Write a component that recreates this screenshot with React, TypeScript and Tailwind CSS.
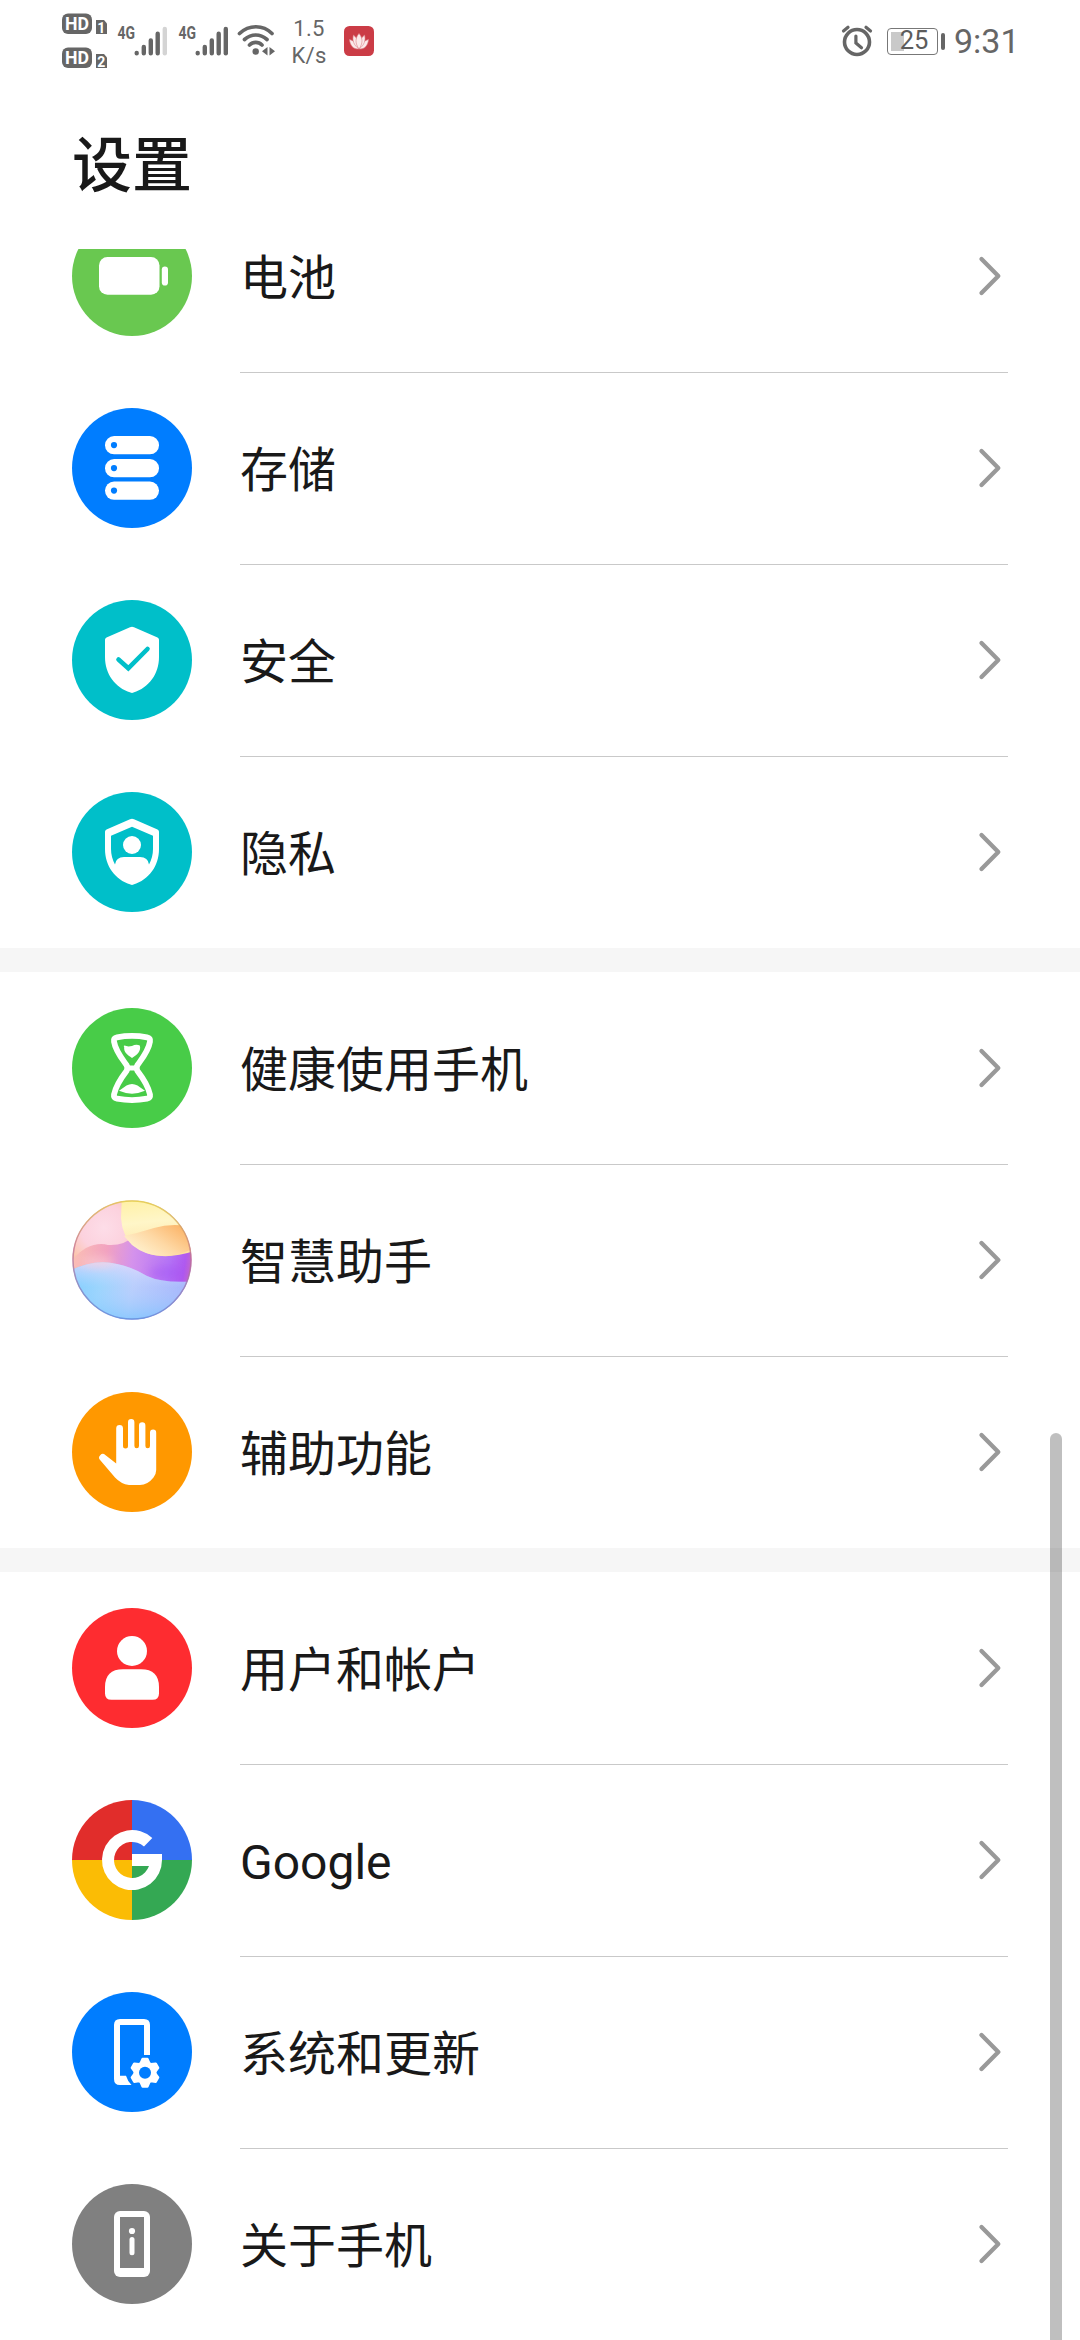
import type { ReactNode } from "react";

const GREY = "#666666";

function HdBadge({ n }: { n: string }) {
  return (
    <svg width="46" height="22" viewBox="0 0 46 22" fontFamily="Roboto, sans-serif" fontWeight="700">
      <rect x="0" y="0.5" width="30" height="20.5" rx="6" fill={GREY} />
      <text x="15" y="17" fontSize="18" fill="#fff" textAnchor="middle" textLength="24" lengthAdjust="spacingAndGlyphs">
        HD
      </text>
      <path d="M34 7h8l3 3.5v10.500h-11z" fill={GREY} />
      <text x="39.300" y="19.500" fontSize="14" fill="#fff" textAnchor="middle">
        {n}
      </text>
    </svg>
  );
}

function Signal({ last }: { last: string }) {
  return (
    <svg width="52" height="40" viewBox="0 -8 52 40" fontFamily="Roboto, sans-serif">
      <text x="0.500" y="14.500" fontSize="18" fontWeight="700" fill={GREY} textLength="17.500" lengthAdjust="spacingAndGlyphs">
        4G
      </text>
      <g strokeWidth="4.400" strokeLinecap="round" stroke={GREY}>
        <path d="M19.700 29v.3M26.800 23v6.300M33.800 16.500v12.800M40.700 9.700v19.600" />
        <path d="M47.800 5v24.300" stroke={last} />
      </g>
    </svg>
  );
}

function Wifi() {
  return (
    <svg width="38" height="32" viewBox="237 24 38 32" fill="none" stroke={GREY} strokeWidth="3.700" strokeLinecap="round">
      <path d="M239.500 33.500C249 24.500 263 24.500 272 33.500M244.500 39.500C251.500 33.500 260 33.500 267 39.500M249.500 45C253 41.500 258.500 41.500 262 45" />
      <circle cx="255.700" cy="51.500" r="3.200" fill={GREY} stroke="none" />
      <path d="M267.500 47v8.500l-5.500-4.200zM269.500 47v8.500l5.500-4.200z" fill={GREY} stroke="none" />
    </svg>
  );
}

function LotusBadge() {
  return (
    <svg width="30" height="30" viewBox="0 0 30 30">
      <rect width="30" height="30" rx="5.500" fill="#cb3c46" />
      <g fill="#fbeaea" stroke="#dc8088" strokeWidth="0.600">
        <path d="M15 23C9 23.500 6 19 5.500 13.500c4 1 7.500 4 9.500 9.500zM15 23c6 .5 9-4 9.500-9.500-4 1-7.500 4-9.500 9.500z" />
        <path d="M15 23C9.500 19 8 14 9.500 9c3.500 3 5.500 7 5.500 14zM15 23c5.500-4 7-9 5.500-14-3.500 3-5.500 7-5.500 14z" />
        <path d="M15 23c-4-5.500-4-11 0-15.500 4 4.500 4 10 0 15.500z" />
      </g>
    </svg>
  );
}

function Alarm() {
  return (
    <svg width="32" height="32" viewBox="840 24 32 32" fill="none" stroke={GREY} strokeLinecap="round">
      <circle cx="856" cy="41" r="12.500" strokeWidth="3.600" />
      <path d="M854.900 35v7l5.600 4.800M842.500 30l4.500-3.700M869.500 30l-4.500-3.700" strokeWidth="3.200" />
    </svg>
  );
}

function BatteryLevel() {
  return (
    <div className="ml-[14px] flex items-center">
      <div className="flex h-[27px] w-[51px] items-center rounded-[4px] border-[1.500px] border-[#777] bg-[linear-gradient(#c9c9c9,#c9c9c9)] bg-[length:13px_19px] bg-[position:3px_3px] bg-no-repeat">
        <span className="w-full pl-[3px] text-center text-[25.500px] leading-none text-[#5c5c5c]">25</span>
      </div>
      <div className="ml-[3px] h-[17px] w-[4px] rounded-full bg-[#666]" />
    </div>
  );
}

function StatusBar() {
  return (
    <div className="flex h-20 items-start pl-[62px] font-[Roboto,sans-serif] text-[#666]">
      <div className="flex w-[46px] flex-col gap-[12px] pt-[13px]">
        <HdBadge n="1" />
        <HdBadge n="2" />
      </div>
      <div className="ml-[9px] flex gap-[9px] pt-[16px]">
        <Signal last="#d4d4d4" />
        <Signal last={GREY} />
      </div>
      <div className="ml-[7px] pt-[24px]">
        <Wifi />
      </div>
      <div className="ml-[16px] flex w-[36px] flex-col items-center pt-[15px] text-[22px] leading-[27px] tracking-[0.300px]">
        <span>1.5</span>
        <span>K/s</span>
      </div>
      <div className="ml-[17px] pt-[26px]">
        <LotusBadge />
      </div>
      <div className="mr-[66px] ml-auto flex items-center pt-[25px]">
        <Alarm />
        <BatteryLevel />
        <span className="ml-[9px] w-[60px] text-[34px] leading-[32px] whitespace-nowrap">9:31</span>
      </div>
    </div>
  );
}

const SHIELD = "M60 26.800Q61 26.800 62 27.300L85.500 37.500Q87 38.200 87 39.800V57C87 74 77 87.500 61.500 92.600Q60 93.200 58.500 92.600C43 87.500 33 74 33 57V39.800Q33 38.200 34.500 37.500L58 27.300Q59 26.800 60 26.800Z";

function Disc({ color, children }: { color: string; children: ReactNode }) {
  return (
    <svg width="120" height="120" viewBox="0 0 120 120" fill="#fff" className="shrink-0">
      <circle cx="60" cy="60" r="60" fill={color} />
      {children}
    </svg>
  );
}

const BatteryIcon = () => (
  <Disc color="#69c850">
    <rect x="27" y="41" width="60.500" height="37.700" rx="8.500" />
    <rect x="89.800" y="50.500" width="6.200" height="19" rx="3.100" />
  </Disc>
);

const StorageIcon = () => (
  <Disc color="#007dff">
    {[28, 51, 73.5].map((y) => (
      <g key={y}>
        <rect x="33" y={y} width="54" height="18.300" rx="9.100" />
        <circle cx="42" cy={y + 9.1} r="3.100" fill="#007dff" />
      </g>
    ))}
  </Disc>
);

const SecurityIcon = () => (
  <Disc color="#00bfc9">
    <path d={SHIELD} />
    <path d="M46.500 59.500L56.300 68.300 75.500 49" fill="none" stroke="#00bfc9" strokeWidth="4.600" strokeLinecap="round" />
  </Disc>
);

const PrivacyIcon = () => (
  <Disc color="#00bfc9">
    <path d={SHIELD} />
    <path d="M60 34.800L81 43.800V57Q81 65 77 72.500Q76 65 68 65H52Q44 65 43 72.500Q39 65 39 57V43.800Z" fill="#00bfc9" />
    <circle cx="60" cy="53" r="9" />
  </Disc>
);

const HourglassIcon = () => (
  <Disc color="#48cc48">
    <path
      d="M45 29.300Q60 26.500 75 29.300Q78.800 30 78 33.500C76.500 43 70.500 50 65.500 57Q63.800 60 65.500 63C70.500 69.500 76 77 78 86.500Q78.500 90 75 90.700Q60 93.500 45 90.700Q41.500 90 42 86.500C44 77 49.500 69.500 54.500 63Q56.200 60 54.500 57C49.500 50 43.500 43 42 33.500Q41.200 30 45 29.300Z"
      fill="none"
      stroke="#fff"
      strokeWidth="5.800"
    />
    <rect x="57" y="57.500" width="6" height="5" />
    <path d="M52.200 39Q51 38 52.500 37.600Q55.500 39 60 38Q64 36 67.800 37.500C69.500 43 65 47 60 50C55.500 47 51.500 44 52.200 39Z" />
    <path d="M47 82.800Q51 80 54.500 77.500Q60 74.500 65.500 77.500Q69 80 73 82.800Q60 88.500 47 82.800Z" />
  </Disc>
);

const AssistantIcon = () => (
  <svg width="120" height="120" viewBox="0 0 120 120" className="shrink-0">
    <defs>
      <clipPath id="orb">
        <circle cx="60" cy="60" r="59.500" />
      </clipPath>
      <linearGradient id="rim" x1="0.600" y1="0" x2="0.500" y2="1">
        <stop offset="0" stopColor="#e0c83c" />
        <stop offset="0.450" stopColor="#c07090" />
        <stop offset="1" stopColor="#5f86d8" />
      </linearGradient>
      <linearGradient id="band" x1="0" y1="0.450" x2="1" y2="0.600">
        <stop offset="0" stopColor="#fbc0b4" />
        <stop offset="0.280" stopColor="#f2a2c0" />
        <stop offset="0.500" stopColor="#d492ec" />
        <stop offset="0.800" stopColor="#b574f6" />
        <stop offset="0.930" stopColor="#b05af0" />
        <stop offset="1" stopColor="#c868c4" />
      </linearGradient>
      <radialGradient id="blush" gradientUnits="userSpaceOnUse" cx="32" cy="28" r="42">
        <stop offset="0" stopColor="#fddde8" />
        <stop offset="0.550" stopColor="#fcd2de" />
        <stop offset="1" stopColor="#fcc4a8" />
      </radialGradient>
      <linearGradient id="sun" x1="0.200" y1="0" x2="0.350" y2="1">
        <stop offset="0" stopColor="#fff0a0" />
        <stop offset="0.450" stopColor="#fff6c8" />
        <stop offset="1" stopColor="#fde0a0" />
      </linearGradient>
      <linearGradient id="peach" x1="0.100" y1="0.700" x2="0.900" y2="0.200">
        <stop offset="0" stopColor="#fff0cc" />
        <stop offset="0.450" stopColor="#fed8a4" />
        <stop offset="1" stopColor="#fbb468" />
      </linearGradient>
      <linearGradient id="sea" x1="0" y1="0.400" x2="1" y2="0.500">
        <stop offset="0" stopColor="#70ccff" />
        <stop offset="0.250" stopColor="#94d4fd" />
        <stop offset="0.500" stopColor="#b8ccfc" />
        <stop offset="1" stopColor="#9ca8fb" />
      </linearGradient>
      <linearGradient id="mist" x1="0" y1="0" x2="0" y2="1">
        <stop offset="0" stopColor="#ecd8fc" stopOpacity="0.800" />
        <stop offset="0.400" stopColor="#c0d8ff" stopOpacity="0.200" />
        <stop offset="1" stopColor="#66c4ff" stopOpacity="0.700" />
      </linearGradient>
      <filter id="soft" x="-10%" y="-10%" width="120%" height="120%">
        <feGaussianBlur stdDeviation="0.700" />
      </filter>
      <filter id="softer" x="-60%" y="-60%" width="220%" height="220%">
        <feGaussianBlur stdDeviation="4" />
      </filter>
    </defs>
    <g clipPath="url(#orb)">
      <rect width="120" height="120" fill="url(#band)" />
      <ellipse cx="95" cy="73" rx="18" ry="7" fill="#a050f4" opacity="0.400" filter="url(#softer)" />
      <g filter="url(#soft)">
        <path d="M-5 -5H62V36Q52 46 36 45Q26 42 14 48Q4 54 -5 66Z" fill="url(#blush)" />
        <path d="M50 -5H125V50Q85 64 62 46Q50 36 49 18Z" fill="url(#sun)" />
        <path d="M52 36Q66 33 82 28Q102 22 125 28V47Q86 66 60 45Z" fill="url(#peach)" />
        <path d="M-5 72Q22 58 45 64Q60 67 75 76Q92 84 125 81V125H-5Z" fill="url(#sea)" />
        <path d="M-5 72Q22 58 45 64Q60 67 75 76Q92 84 125 81V125H-5Z" fill="url(#mist)" />
      </g>
      <ellipse cx="26" cy="62" rx="16" ry="5" fill="#fbd0d8" opacity="0.600" filter="url(#softer)" />
    </g>
    <circle cx="60" cy="60" r="59" fill="none" stroke="url(#rim)" strokeWidth="1.500" strokeOpacity="0.750" />
  </svg>
);

const HandIcon = () => (
  <Disc color="#ff9800">
    <path d="M44.200 71.500V36.500a3.400 3.400 0 0 1 6.800 0V54a2.500 2.500 0 0 0 5 0V30.200a3.200 3.200 0 0 1 6.400 0V54a2.300 2.300 0 0 0 4.600 0V33.400a3.200 3.200 0 0 1 6.400 0V54a2.300 2.300 0 0 0 4.600 0V40.700a3.100 3.100 0 0 1 6.200 0V78Q84.200 82 81.500 85.500Q75.500 93 68 93H57Q49 92 43 85.500L28.300 68.300a3.600 3.600 0 0 1 5-5.200Z" />
  </Disc>
);

const UserIcon = () => (
  <Disc color="#fe2c30">
    <circle cx="60" cy="43" r="15" />
    <path d="M51 61.200H69Q87 61.200 87 79V85.500Q87 91.800 80.500 91.800H39.500Q33 91.800 33 85.500V79Q33 61.200 51 61.200Z" />
  </Disc>
);

const GoogleIcon = () => (
  <svg width="120" height="120" viewBox="0 0 120 120" className="shrink-0">
    <path d="M60 60V0A60 60 0 0 0 0 60Z" fill="#e12d2b" />
    <path d="M60 60H120A60 60 0 0 0 60 0Z" fill="#3470f2" />
    <path d="M60 60V120A60 60 0 0 0 120 60Z" fill="#34a853" />
    <path d="M60 60H0A60 60 0 0 0 60 120Z" fill="#fbbc05" />
    <path d="M80.300 38A30 30 0 1 0 90 60V54H60V66H77A18 18 0 1 1 72 46.500Z" fill="#fff" />
  </svg>
);

const SystemIcon = () => (
  <Disc color="#007dff">
    <path d="M78 63V33Q78 27 72 27H48Q42 27 42 33V87Q42 93 48 93H59.500Q55.500 89 54 83.800H48V33H72V63Z" />
    <g>
      <circle cx="73" cy="80.700" r="11.500" />
      {[0, 60, 120, 180, 240, 300].map((a) => (
        <path key={a} d="M67.500 71L69.500 66.400Q69.800 65.700 70.600 65.700H75.400Q76.200 65.700 76.500 66.400L78.500 71Z" transform={`rotate(${a} 73 80.700)`} />
      ))}
      <circle cx="73" cy="80.700" r="6" fill="#007dff" />
    </g>
  </Disc>
);

const AboutIcon = () => (
  <Disc color="#808080">
    <rect x="42" y="27" width="36" height="66" rx="6" />
    <rect x="48" y="33" width="24" height="51" fill="#808080" />
    <circle cx="60" cy="47" r="3.100" />
    <rect x="57.500" y="53" width="5" height="18.300" rx="2.500" />
  </Disc>
);

type Item = { label: string; Icon: () => ReactNode };

const GROUPS: Item[][] = [
  [
    { label: "电池", Icon: BatteryIcon },
    { label: "存储", Icon: StorageIcon },
    { label: "安全", Icon: SecurityIcon },
    { label: "隐私", Icon: PrivacyIcon },
  ],
  [
    { label: "健康使用手机", Icon: HourglassIcon },
    { label: "智慧助手", Icon: AssistantIcon },
    { label: "辅助功能", Icon: HandIcon },
  ],
  [
    { label: "用户和帐户", Icon: UserIcon },
    { label: "Google", Icon: GoogleIcon },
    { label: "系统和更新", Icon: SystemIcon },
    { label: "关于手机", Icon: AboutIcon },
  ],
];

function Row({ label, Icon, divided }: Item & { divided: boolean }) {
  return (
    <li className="flex h-48 items-center pr-[72px] pl-[72px]">
      <Icon />
      <div className={`ml-12 flex h-48 flex-1 items-center justify-between border-t pb-px ${divided ? "border-[#c9c9c9]" : "border-transparent"}`}>
        <span className="pt-[6px] text-[48px] leading-[72px] text-[#191919]">{label}</span>
        <svg width="36" height="44" viewBox="0 0 36 44" fill="none" stroke="#999" strokeWidth="4.300" strokeLinecap="round" strokeLinejoin="round">
          <path d="M9.500 5L26.300 22L9.500 39" />
        </svg>
      </div>
    </li>
  );
}

export default function App() {
  return (
    <div className="relative flex h-[2340px] w-[1080px] flex-col overflow-hidden bg-white font-[Roboto,'Noto_Sans_CJK_SC',sans-serif]">
      <header className="h-[249px] shrink-0">
        <StatusBar />
        <h1 className="px-[72px] pt-[42px] text-[60px] leading-[90px] font-medium text-[#191919]">设置</h1>
      </header>
      <main className="flex flex-1 flex-col justify-end gap-6 overflow-hidden bg-[#f6f6f6]">
        {GROUPS.map((items, g) => (
          <ul key={g} className="shrink-0 bg-white">
            {items.map((item, i) => (
              <Row key={item.label} {...item} divided={i > 0} />
            ))}
          </ul>
        ))}
      </main>
      <div className="absolute top-[1433px] right-[18px] h-[920px] w-3 rounded-full bg-black/25" />
    </div>
  );
}
